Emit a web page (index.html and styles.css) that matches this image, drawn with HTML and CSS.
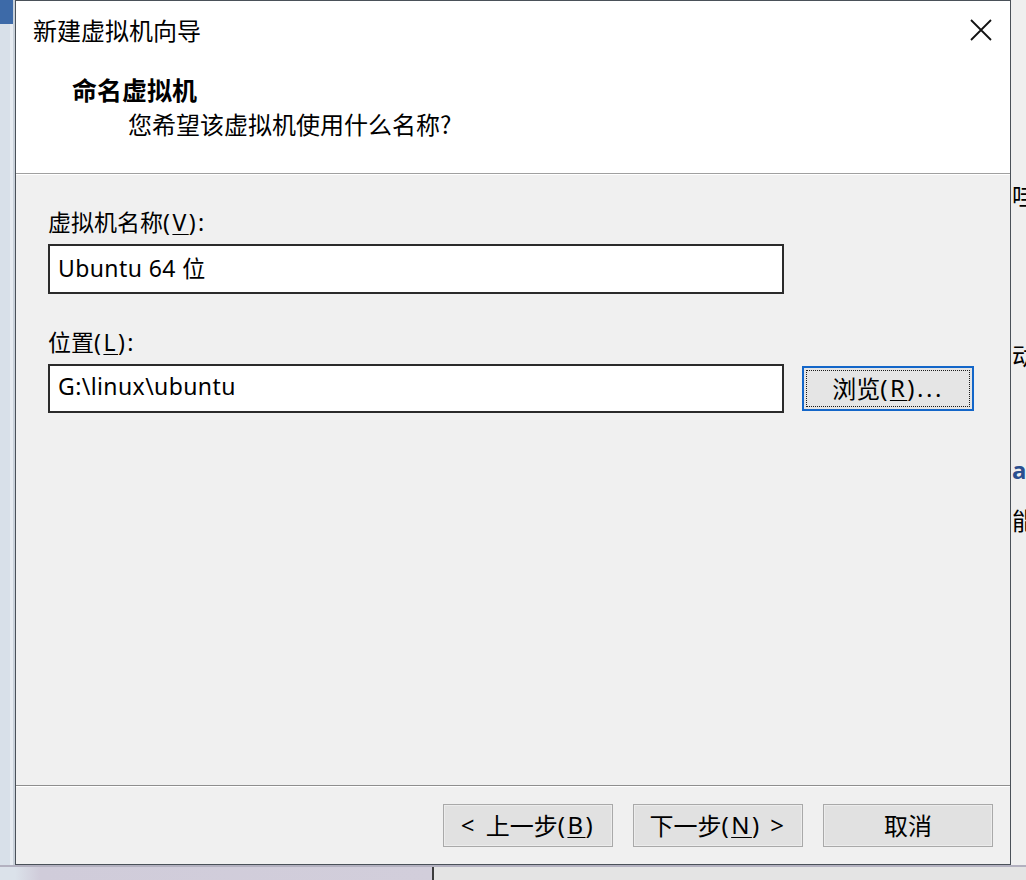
FILE: index.html
```html
<!DOCTYPE html>
<html lang="zh-CN">
<head>
<meta charset="utf-8">
<title>新建虚拟机向导</title>
<link rel="stylesheet" href="styles.css">
</head>
<body>
<div class="screen">
  <div class="left-strip"><div class="blue-tab"></div></div>
  <div class="dialog">
    <div class="header">
      <div class="titlebar">
        <span class="title">新建虚拟机向导</span>
        <svg class="close" width="22" height="22" viewBox="0 0 22 22" aria-label="关闭">
          <path d="M1 1 L21 21 M21 1 L1 21" stroke="#111" stroke-width="1.8" fill="none"/>
        </svg>
      </div>
      <div class="heading">命名虚拟机</div>
      <div class="subtitle">您希望该虚拟机使用什么名称?</div>
    </div>
    <div class="body">
      <div class="label">虚拟机名称<span class="mn">(<u>V</u>):</span></div>
      <div class="field-row">
        <div class="input">Ubuntu 64 位</div>
      </div>
      <div class="label label-2">位置<span class="mn">(<u>L</u>):</span></div>
      <div class="field-row">
        <div class="input input-2">G:\linux\ubuntu</div>
        <div class="btn browse">浏览<span class="mn">(<u>R</u>)...</span></div>
      </div>
    </div>
    <div class="footer">
      <div class="btn footer-btn"><span class="mn">&lt;&nbsp;</span>上一步<span class="mn">(<u>B</u>)</span></div>
      <div class="btn footer-btn">下一步<span class="mn">(<u>N</u>)&nbsp;&gt;</span></div>
      <div class="btn footer-btn">取消</div>
    </div>
  </div>
  <div class="right-strip">
    <div class="frag frag-1">哇</div>
    <div class="frag frag-2">动</div>
    <div class="frag frag-3">a</div>
    <div class="frag frag-4">能</div>
  </div>
  <div class="bottom-strip">
    <div class="bottom-left"></div>
    <div class="bottom-right"></div>
  </div>
</div>
</body>
</html>
```

FILE: styles.css
```css
* { box-sizing: border-box; }

html, body {
  margin: 0;
  padding: 0;
  width: 1026px;
  height: 880px;
  overflow: hidden;
  background: #dfe5ec;
}

body {
  font-family: "Segoe UI", "Noto Sans", "Noto Sans CJK SC", sans-serif;
  color: #000;
}

.screen {
  display: grid;
  grid-template-columns: 15px 996px 15px;
  grid-template-rows: 865px 15px;
  width: 1026px;
  height: 880px;
}

/* ---------- surroundings ---------- */
.left-strip {
  background: linear-gradient(to right, #d8e0e9 0, #d8e0e9 10px, #e6ebf1 10px, #e6ebf1 13px, #c9d1da 13px);
}

.blue-tab {
  height: 24px;
  width: 13px;
  background: #3d6aa8;
}

.right-strip {
  background: #efefef;
  overflow: hidden;
  font-family: "Noto Sans CJK SC", sans-serif;
  font-size: 24px;
  line-height: 30px;
  padding-left: 1px;
  white-space: nowrap;
}

.frag { height: 30px; }
.frag-1 { margin-top: 180px; }
.frag-2 { margin-top: 130px; }
.frag-3 { margin-top: 85px; color: #2a4f8f; font-weight: 700; font-family: "Noto Sans", sans-serif; }
.frag-4 { margin-top: 20px; }

.bottom-strip {
  grid-column: 1 / 4;
  display: flex;
  border-top: 2px solid #b3b1c0;
}

.bottom-left {
  width: 434px;
  background: linear-gradient(to right, #dbe2ea 0, #dbe2ea 15px, #d0ccda 40px, #d2cedb 100%);
  border-right: 2px solid #3c3c3c;
}

.bottom-right {
  flex: 1;
  background: #e4e4e4;
}

/* ---------- dialog ---------- */
.dialog {
  display: flex;
  flex-direction: column;
  border: 1px solid #4a5159;
  background: #f0f0f0;
}

.header {
  height: 173px;
  background: #ffffff;
  border-bottom: 1px solid #a0a0a0;
  display: flex;
  flex-direction: column;
}

.titlebar {
  height: 57px;
  display: flex;
  align-items: center;
  justify-content: space-between;
  padding-left: 17px;
  padding-right: 18px;
}

.title {
  font-size: 24px;
  line-height: 30px;
  font-family: "Noto Sans CJK SC", sans-serif;
}

.close { display: block; }

.heading {
  margin-top: 16px;
  margin-left: 56px;
  font-size: 25px;
  line-height: 30px;
  font-weight: 700;
  font-family: "Noto Sans CJK SC", sans-serif;
}

.subtitle {
  margin-top: 5px;
  margin-left: 112px;
  font-size: 24px;
  line-height: 30px;
  font-family: "Noto Sans CJK SC", sans-serif;
}

.body {
  flex: 1;
  border-top: 1px solid #ffffff;
  border-bottom: 1px solid #8e8e8e;
  padding: 32px 0 0 32px;
  font-size: 23px;
}

.label {
  line-height: 30px;
  height: 30px;
}

.mn { letter-spacing: 2.5px; }

.label u, .btn u { text-underline-offset: 3px; text-decoration-thickness: 1px; }

.label-2 { margin-top: 33px; }

.field-row {
  display: flex;
  align-items: center;
  margin-top: 7px;
}

.input {
  width: 736px;
  height: 50px;
  border: 2px solid #2b2b2b;
  background: #ffffff;
  padding: 0 0 5px 8px;
  display: flex;
  align-items: center;
  font-size: 23px;
  letter-spacing: 0.4px;
}

.input-2 { height: 49px; }

.btn {
  display: flex;
  align-items: center;
  justify-content: center;
  background: #e1e1e1;
  font-size: 24px;
  white-space: nowrap;
}

.browse {
  margin-left: 18px;
  width: 172px;
  height: 45px;
  padding-bottom: 3px;
  border: 2px solid #1366c9;
  outline: 1px dotted #1b1b1b;
  outline-offset: -5px;
  background: #e5e5e5;
}

.footer {
  height: 78px;
  border-top: 1px solid #ffffff;
  display: flex;
  justify-content: flex-end;
  align-items: flex-start;
  gap: 20px;
  padding: 17px 17px 0 0;
}

.footer-btn {
  width: 170px;
  height: 43px;
  padding-bottom: 2px;
  border: 1px solid #a9a9a9;
  box-shadow: inset 0 0 0 1px #ececec;
}
```
